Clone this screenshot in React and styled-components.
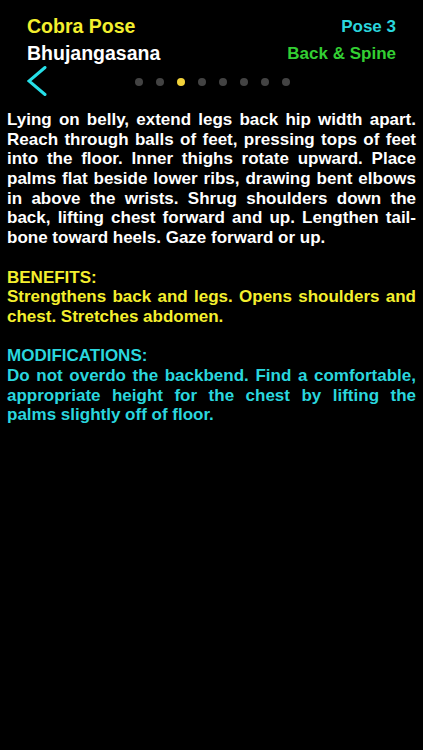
import React from 'react';
import styled, { createGlobalStyle } from 'styled-components';

const GlobalStyle = createGlobalStyle`
  html, body {
    margin: 0;
    padding: 0;
    background: #000;
  }
  body {
    font-family: "Liberation Sans", Arial, sans-serif;
    -webkit-font-smoothing: antialiased;
  }
`;

const Screen = styled.div`
  width: 423px;
  min-height: 750px;
  background: #000;
  overflow: hidden;
`;

const Header = styled.header`
  padding: 13px 27px 0;
`;

const TitleRow = styled.div`
  display: flex;
  justify-content: space-between;
  align-items: center;
  height: 27px;
`;

const Label = styled.span`
  font-size: ${(p) => p.size || 19.5}px;
  font-weight: 700;
  color: ${(p) => p.color};
  line-height: 27px;
`;

const Nav = styled.div`
  display: grid;
  grid-template-columns: 1fr auto 1fr;
  align-items: center;
  height: 30px;
  margin-top: -1px;
`;

const BackButton = styled.button`
  background: none;
  border: none;
  padding: 0;
  width: 20px;
  height: 30px;
  cursor: pointer;
  display: flex;
  align-items: center;
`;

const Dots = styled.div`
  display: flex;
  gap: 13px;
  margin: 2px 0 0 1px;
`;

const Dot = styled.span`
  width: 8px;
  height: 8px;
  border-radius: 50%;
  background: ${(p) => (p.active ? '#f2d23a' : '#434343')};
`;

const Body = styled.div`
  padding: 14px 7px 0;
`;

const Line = styled.div`
  font-size: 17px;
  font-weight: 700;
  line-height: 19.7px;
  height: 19.7px;
  color: ${(p) => p.color};
  text-align: justify;
  text-align-last: ${(p) => (p.last ? 'left' : 'justify')};
  white-space: nowrap;
`;

const Gap = styled.div`
  height: 19.7px;
`;

const sections = [
  {
    color: '#ffffff',
    lines: [
      'Lying on belly, extend legs back hip width apart.',
      'Reach through balls of feet, pressing tops of feet',
      'into the floor. Inner thighs rotate upward. Place',
      'palms flat beside lower ribs, drawing bent elbows',
      'in above the wrists. Shrug shoulders down the',
      'back, lifting chest forward and up. Lengthen tail-',
      'bone toward heels. Gaze forward or up.',
    ],
  },
  {
    color: '#f4ef2e',
    heading: 'BENEFITS:',
    lines: [
      'Strengthens back and legs. Opens shoulders and',
      'chest. Stretches abdomen.',
    ],
  },
  {
    color: '#2ad6de',
    heading: 'MODIFICATIONS:',
    lines: [
      'Do not overdo the backbend. Find a comfortable,',
      'appropriate height for the chest by lifting the',
      'palms slightly off of floor.',
    ],
  },
];

function Chevron() {
  return (
    <svg width="20" height="30" viewBox="0 0 20 30">
      <polyline
        points="18,1.5 2,15 18,28.5"
        fill="none"
        stroke="#26dfe8"
        strokeWidth="3"
        strokeLinecap="round"
        strokeLinejoin="miter"
      />
    </svg>
  );
}

export default function App() {
  const active = 2;
  return (
    <Screen>
      <GlobalStyle />
      <Header>
        <TitleRow>
          <Label color="#f4ef2e">Cobra Pose</Label>
          <Label color="#2ad6de" size={17}>Pose 3</Label>
        </TitleRow>
        <TitleRow>
          <Label color="#ffffff">Bhujangasana</Label>
          <Label color="#33cf33" size={17}>Back &amp; Spine</Label>
        </TitleRow>
        <Nav>
          <BackButton aria-label="Back">
            <Chevron />
          </BackButton>
          <Dots>
            {Array.from({ length: 8 }).map((_, i) => (
              <Dot key={i} active={i === active} />
            ))}
          </Dots>
          <span />
        </Nav>
      </Header>
      <Body>
        {sections.map((s, si) => (
          <React.Fragment key={si}>
            {si > 0 && <Gap />}
            {s.heading && (
              <Line color={s.color} last>
                {s.heading}
              </Line>
            )}
            {s.lines.map((l, li) => (
              <Line key={li} color={s.color} last={li === s.lines.length - 1}>
                {l}
              </Line>
            ))}
          </React.Fragment>
        ))}
      </Body>
    </Screen>
  );
}
